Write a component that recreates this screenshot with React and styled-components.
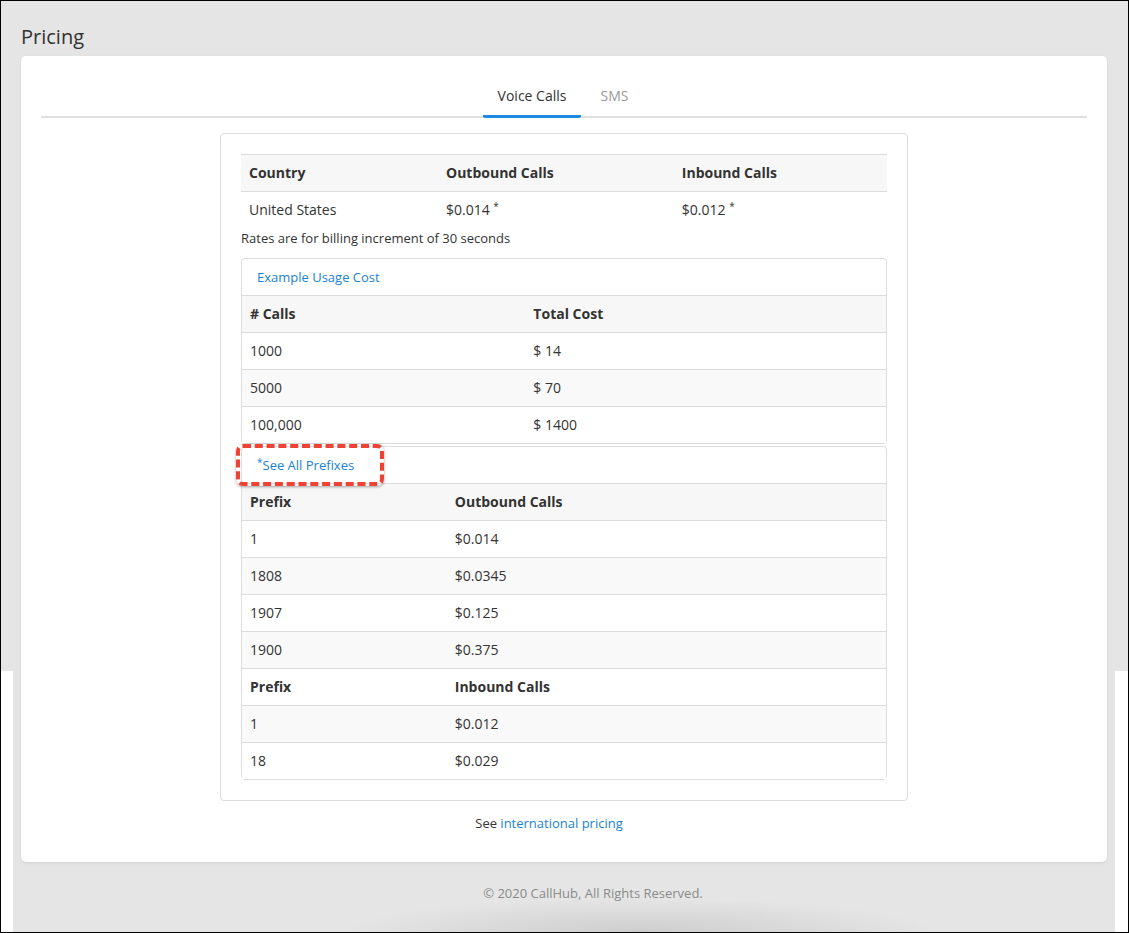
import React from 'react'
import styled, {createGlobalStyle} from 'styled-components'

const GlobalStyle = createGlobalStyle`
    html, body {
        margin: 0;
        padding: 0;
    }
    body {
        font-family: "Open Sans", "Liberation Sans", sans-serif;
        font-size: 14px;
        color: #333;
    }
    * {
        box-sizing: border-box;
    }
`

const prefixOut = [
    ['1', '$0.014'],
    ['1808', '$0.0345'],
    ['1907', '$0.125'],
    ['1900', '$0.375'],
]

const prefixIn = [
    ['1', '$0.012'],
    ['18', '$0.029'],
]

const usage = [
    ['1000', '$ 14'],
    ['5000', '$ 70'],
    ['100,000', '$ 1400'],
]

const App = () => {
    return (
        <Frame>
            <GlobalStyle />
            <Main>
                <Title>Pricing</Title>
                <Card>
                    <TabBar>
                        <Tab active>Voice Calls</Tab>
                        <Tab>SMS</Tab>
                    </TabBar>
                    <RateBox>
                        <Table>
                            <colgroup>
                                <col style={{width: '30.5%'}} />
                                <col style={{width: '36.5%'}} />
                                <col />
                            </colgroup>
                            <thead>
                                <Row head>
                                    <Th>Country</Th>
                                    <Th>Outbound Calls</Th>
                                    <Th>Inbound Calls</Th>
                                </Row>
                            </thead>
                            <tbody>
                                <Row>
                                    <Td>United States</Td>
                                    <Td>$0.014 <Star>*</Star></Td>
                                    <Td>$0.012 <Star>*</Star></Td>
                                </Row>
                            </tbody>
                        </Table>
                        <Note>Rates are for billing increment of 30 seconds</Note>
                        <Panel>
                            <PanelHeading>
                                <LinkText href="#">Example Usage Cost</LinkText>
                            </PanelHeading>
                            <Table>
                                <colgroup>
                                    <col style={{width: '44%'}} />
                                    <col />
                                </colgroup>
                                <thead>
                                    <Row head>
                                        <Th># Calls</Th>
                                        <Th>Total Cost</Th>
                                    </Row>
                                </thead>
                                <tbody>
                                    {usage.map(([calls, cost], i) => (
                                        <Row key={calls} striped={i % 2 === 1}>
                                            <Td>{calls}</Td>
                                            <Td>{cost}</Td>
                                        </Row>
                                    ))}
                                </tbody>
                            </Table>
                        </Panel>
                        <Panel gap>
                            <Highlight />
                            <PanelHeading>
                                <LinkText href="#"><LinkStar>*</LinkStar>See All Prefixes</LinkText>
                            </PanelHeading>
                            <Table>
                                <colgroup>
                                    <col style={{width: '31.8%'}} />
                                    <col />
                                </colgroup>
                                <tbody>
                                    <Row head>
                                        <Th>Prefix</Th>
                                        <Th>Outbound Calls</Th>
                                    </Row>
                                    {prefixOut.map(([p, r], i) => (
                                        <Row key={'o' + p} striped={i % 2 === 1}>
                                            <Td>{p}</Td>
                                            <Td>{r}</Td>
                                        </Row>
                                    ))}
                                    <Row>
                                        <Th>Prefix</Th>
                                        <Th>Inbound Calls</Th>
                                    </Row>
                                    {prefixIn.map(([p, r], i) => (
                                        <Row key={'i' + p} striped={i % 2 === 0}>
                                            <Td>{p}</Td>
                                            <Td>{r}</Td>
                                        </Row>
                                    ))}
                                </tbody>
                            </Table>
                        </Panel>
                    </RateBox>
                    <SeeMore>
                        See <LinkText href="#">international pricing</LinkText>
                    </SeeMore>
                </Card>
                <Footer>© 2020 CallHub, All Rights Reserved.</Footer>
            </Main>
        </Frame>
    )
}

const Frame = styled.div`
    height: 933px;
    border: 1px solid #000;
    overflow: hidden;
    background: linear-gradient(#e5e5e5 0, #e5e5e5 670px, #fff 670px);
`

const Main = styled.div`
    margin: 0 13px 0 12px;
    height: 100%;
    padding: 0 8px;
    background: #e5e5e5;
    display: flex;
    flex-direction: column;
`

const Title = styled.h1`
    margin: 25px 0 8px;
    font-size: 20px;
    line-height: 22px;
    font-weight: 400;
    color: #333;
`

const Card = styled.div`
    background: #fff;
    border-radius: 5px;
    box-shadow: 0 1px 3px rgba(0, 0, 0, 0.08);
    padding: 20px 20px 29px;
`

const TabBar = styled.div`
    display: flex;
    justify-content: center;
    gap: 4px;
    padding-right: 2px;
    border-bottom: 2px solid #e0e0e0;
`

const Tab = styled.div`
    padding: 10px 15px 9px;
    line-height: 20px;
    margin-bottom: -2px;
    color: ${p => (p.active ? '#333' : '#999')};
    border-bottom: 3px solid ${p => (p.active ? '#1e88e5' : 'transparent')};
    border-radius: 2px;
`

const RateBox = styled.div`
    width: 688px;
    margin: 15px auto 0;
    border: 1px solid #ddd;
    border-radius: 4px;
    padding: 20px;
`

const Table = styled.table`
    width: 100%;
    border-collapse: collapse;
    table-layout: fixed;
`

const Row = styled.tr`
    background: ${p => (p.head ? '#f7f7f7' : p.striped ? '#f9f9f9' : '#fff')};
`

const Th = styled.td`
    padding: 8px;
    line-height: 20px;
    font-weight: 700;
    border-top: 1px solid #ddd;
    border-bottom: 1px solid #ddd;
    text-align: left;
`

const Td = styled.td`
    padding: 8px;
    line-height: 20px;
    border-top: 1px solid #ddd;
`

const Star = styled.sup`
    font-size: 10px;
    vertical-align: top;
    position: relative;
    top: -4px;
`

const Note = styled.div`
    font-size: 13px;
    line-height: 20px;
    margin-bottom: 10px;
`

const Panel = styled.div`
    position: relative;
    border: 1px solid #ddd;
    border-radius: 4px;
    margin-top: ${p => (p.gap ? '2px' : '0')};

    table tr:first-child td {
        border-top: 1px solid #ddd;
    }
    table tr:last-child td {
        border-bottom: none;
    }
`

const PanelHeading = styled.div`
    padding: 8px 15px;
    line-height: 20px;
    font-size: 13px;
`

const LinkText = styled.a`
    color: #1a82d2;
    text-decoration: none;
    font-size: 13px;
`

const LinkStar = styled.span`
    font-size: 10px;
    vertical-align: top;
    position: relative;
    top: -3px;
`

const Highlight = styled.div`
    position: absolute;
    left: -6px;
    top: -3px;
    width: 148px;
    height: 42px;
    border: 4px dashed #ee4235;
    border-radius: 7px;
    box-shadow: 0 1px 3px rgba(0, 0, 0, 0.35);
    pointer-events: none;
`

const SeeMore = styled.div`
    margin-top: 12px;
    padding-right: 30px;
    text-align: center;
    line-height: 20px;
    font-size: 13px;
`

const Footer = styled.div`
    flex: 1;
    padding-top: 22px;
    padding-left: 58px;
    text-align: center;
    font-size: 13px;
    line-height: 18px;
    color: #8a8a8a;
    background: radial-gradient(ellipse 300px 34px at 57% 100%, rgba(0, 0, 0, 0.1), rgba(0, 0, 0, 0));
`

export default App
